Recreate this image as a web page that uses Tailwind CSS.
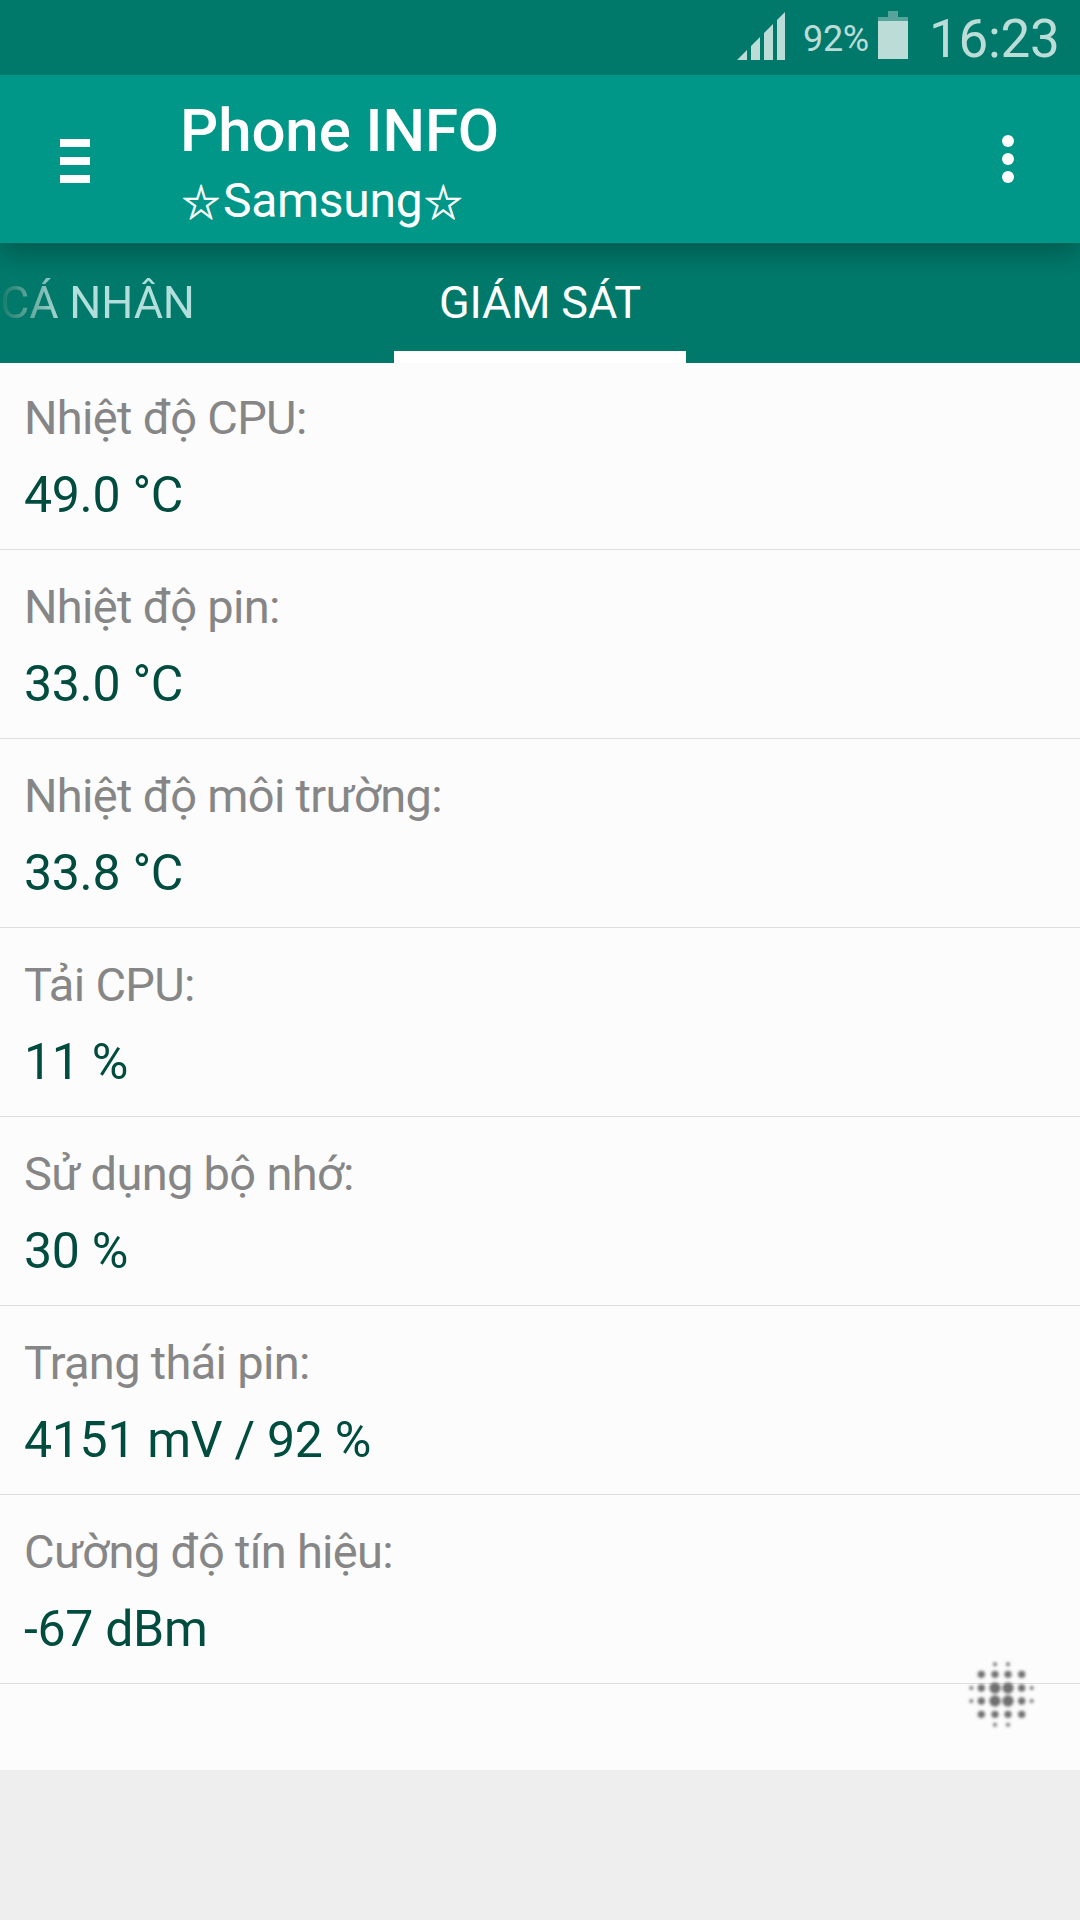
<!DOCTYPE html>
<html lang="vi">
<head>
    <meta charset="UTF-8">
    <meta name="viewport" content="width=device-width, initial-scale=1.0">
    <title>Phone INFO</title>
    <script src="https://cdn.jsdelivr.net/npm/@tailwindcss/browser@4"></script>
</head>
<body class="w-[1080px] h-[1920px] overflow-hidden bg-[#eeeeee] font-['Roboto',sans-serif] flex flex-col">
    <!-- status bar -->
    <div class="relative z-20 h-[75px] shrink-0 bg-[#00796b] text-[#bcdcd8] flex justify-end items-start pr-[19px]">
        <svg class="w-[48px] h-[48px] mt-[12px]" viewBox="0 0 48 48" fill="currentColor">
            <path d="M0 48L10 38V48zM14 34L23 25V48H14zM27 21L36 12V48H27zM40 8L48 0V48H40z" />
        </svg>
        <span class="ml-[18px] mt-[18px] w-[70px] text-[36px] leading-[42px] tracking-[-0.3px] whitespace-nowrap">92%</span>
        <svg class="w-[30px] h-[48px] mt-[11px] ml-[5px]" viewBox="0 0 30 48" fill="currentColor">
            <path opacity=".45" d="M10 0H20V6H30V10H0V6H10z" />
            <path d="M0 10H30V48H0z" />
        </svg>
        <span class="ml-[21px] mt-[8px] w-[132px] text-[53px] leading-[63px] tracking-[-0.3px] whitespace-nowrap">16:23</span>
    </div>

    <!-- app bar -->
    <header class="relative z-10 h-[168px] shrink-0 bg-[#009688] text-white flex shadow-[0_12px_24px_rgba(0,0,0,0.24)]">
        <button class="flex flex-col gap-[10px] ml-[60px] mt-[64px] w-[30px]">
            <span class="block h-[8px] w-full bg-white"></span>
            <span class="block h-[8px] w-full bg-white"></span>
            <span class="block h-[8px] w-full bg-white"></span>
        </button>
        <div class="ml-[90px] pt-[20px] grow">
            <h1 class="text-[60px] leading-[71px] font-medium tracking-[-0.1px]">Phone INFO</h1>
            <p class="mt-[5px] text-[48px] leading-[59px] tracking-[-0.3px] flex items-baseline"><span class="relative -top-px w-[43px] pl-[2px] text-[38px] leading-[40px] font-['Noto_Sans_CJK_JP'] [-webkit-text-stroke:0.7px_white]">☆</span>Samsung<span class="relative -top-px w-[43px] pl-[2px] text-[38px] leading-[40px] font-['Noto_Sans_CJK_JP'] [-webkit-text-stroke:0.7px_white]">☆</span></p>
        </div>
        <button class="flex flex-col gap-[6px] mt-[60px] mr-[66px] w-[12px]">
            <span class="block size-[12px] rounded-full bg-white"></span>
            <span class="block size-[12px] rounded-full bg-white"></span>
            <span class="block size-[12px] rounded-full bg-white"></span>
        </button>
    </header>

    <!-- tabs -->
    <nav class="h-[120px] shrink-0 bg-[#00796b] flex text-[45px] leading-[59px] tracking-[-0.15px]">
        <div class="w-[394px] pt-[30px]">
            <span class="bg-linear-to-r from-[#00796b] to-[#b2dfdb] to-[64px] bg-clip-text text-transparent">CÁ NHÂN</span>
        </div>
        <div class="w-[292px] pt-[30px] text-center text-white border-b-[12px] border-white">GIÁM SÁT</div>
    </nav>

    <main class="relative h-[1407px] shrink-0 bg-[#fcfcfc]">
        <ul id="monitorList" class="-mt-[2px] h-[1409px]"></ul>
        <svg class="absolute left-[966px] top-[1297px] w-[71px] h-[71px]" viewBox="78 60 213 213" fill="#6f6f6f">
            <defs>
                <filter id="soft" x="-20%" y="-20%" width="140%" height="140%"><feGaussianBlur stdDeviation="4" /></filter>
            </defs>
            <g id="dots" filter="url(#soft)"></g>
        </svg>
    </main>

    <script>
        const items = [
            ['Nhiệt độ CPU:', '49.0 °C'],
            ['Nhiệt độ pin:', '33.0 °C'],
            ['Nhiệt độ môi trường:', '33.8 °C'],
            ['Tải CPU:', '11 %'],
            ['Sử dụng bộ nhớ:', '30 %'],
            ['Trạng thái pin:', '4151 mV / 92 %'],
            ['Cường độ tín hiệu:', '-67 dBm']
        ];
        document.getElementById('monitorList').innerHTML = items.map(([label, value]) => `
            <li class="h-[189px] border-b border-[#dedede] pl-[24px] pt-[29px]">
                <div class="text-[47px] leading-[56px] tracking-[-0.68px] text-[#868686]">${label}</div>
                <div class="mt-[19px] text-[50px] leading-[60px] tracking-[-0.3px] text-[#004d40]">${value}</div>
            </li>`).join('');

        // radius of every dot in the 6x6 grid
        const xs = [94, 124, 165, 204, 245, 275];
        const ys = [73, 103, 144, 183, 223, 254];
        const radii = [
            [0, 0, 6, 6, 0, 0],
            [0, 11, 11, 11, 11, 0],
            [6, 11, 17, 17, 11, 6],
            [6, 11, 17, 17, 11, 6],
            [0, 11, 11, 11, 11, 0],
            [0, 0, 6, 6, 0, 0]
        ];
        document.getElementById('dots').innerHTML = radii.map((row, j) =>
            row.map((r, i) => r ? `<circle cx="${xs[i]}" cy="${ys[j]}" r="${r}" />` : '').join('')
        ).join('');
    </script>
</body>
</html>
